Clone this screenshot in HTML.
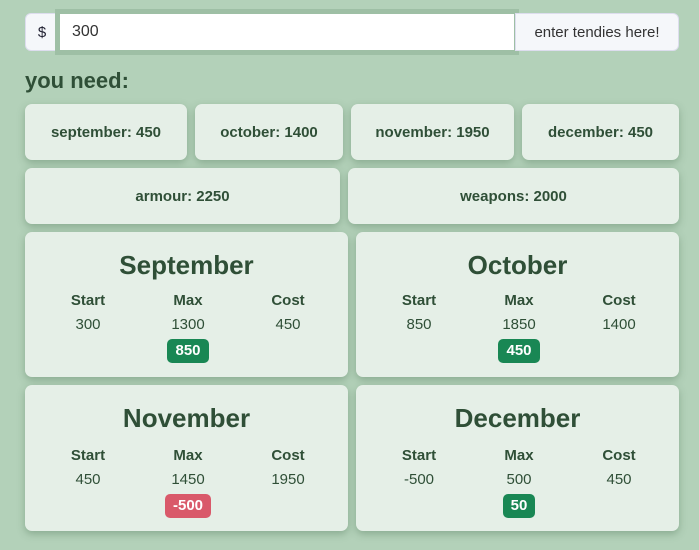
<!DOCTYPE html><html><head><style>
body{margin:0;width:699px;height:550px;background:#b3d1b9;font-family:"Liberation Sans",sans-serif;color:#2f4f37;position:relative;overflow:hidden}
.a{position:absolute;box-sizing:border-box}
.c{background:#e5efe7;border-radius:7px;box-shadow:0 3px 8px rgba(60,100,70,.35);display:flex;align-items:center;justify-content:center;font-size:15px;font-weight:bold}
.big{background:#e5efe7;border-radius:7px;box-shadow:0 3px 8px rgba(60,100,70,.35)}
.t{position:absolute;top:18px;width:100%;text-align:center;font-size:26px;font-weight:bold}
.cols{position:absolute;top:60px;left:13px;display:flex}
.col{width:100px;text-align:center;font-size:15px;line-height:18px}
.col b{display:block;margin-bottom:6px}
.badge{display:inline-block;margin-top:5px;padding:3px 8px;border-radius:5px;color:#fff;font-weight:bold;background:#198754}
</style></head><body>
<div class="a" style="left:25px;top:13px;width:34px;height:38px;background:#f5f7fa;border:1px solid #dde;border-radius:6px 0 0 6px;display:flex;align-items:center;justify-content:center;font-size:15px;color:#223">$</div>
<div class="a" style="left:55px;top:9px;width:464px;height:46px;background:#9ebfa5"></div>
<div class="a" style="left:60px;top:14px;width:454px;height:36px;background:#fff;font-size:16px;color:#333;padding:9px 12px">300</div>
<div class="a" style="left:515px;top:13px;width:164px;height:38px;background:#f5f7fa;border:1px solid #dde;border-radius:0 6px 6px 0;display:flex;align-items:center;justify-content:center;font-size:15px;color:#333">enter tendies here!</div>
<div class="a" style="left:25px;top:68px;font-size:22px;font-weight:bold">you need:</div>
<div class="a c" style="left:25px;top:104px;width:162px;height:56px">september: 450</div>
<div class="a c" style="left:195px;top:104px;width:148px;height:56px">october: 1400</div>
<div class="a c" style="left:351px;top:104px;width:163px;height:56px">november: 1950</div>
<div class="a c" style="left:522px;top:104px;width:157px;height:56px">december: 450</div>
<div class="a c" style="left:25px;top:168px;width:315px;height:56px">armour: 2250</div>
<div class="a c" style="left:348px;top:168px;width:331px;height:56px">weapons: 2000</div>
<div class="a big" style="left:25px;top:232px;width:323px;height:145px"><div class="t">September</div><div class="cols"><div class="col"><b>Start</b>300</div><div class="col"><b>Max</b>1300<br><span class="badge">850</span></div><div class="col"><b>Cost</b>450</div></div></div>
<div class="a big" style="left:356px;top:232px;width:323px;height:145px"><div class="t">October</div><div class="cols"><div class="col"><b>Start</b>850</div><div class="col"><b>Max</b>1850<br><span class="badge">450</span></div><div class="col"><b>Cost</b>1400</div></div></div>
<div class="a big" style="left:25px;top:385px;width:323px;height:146px"><div class="t">November</div><div class="cols" style="top:62px"><div class="col"><b>Start</b>450</div><div class="col"><b>Max</b>1450<br><span class="badge" style="background:#d9596a">-500</span></div><div class="col"><b>Cost</b>1950</div></div></div>
<div class="a big" style="left:356px;top:385px;width:323px;height:146px"><div class="t">December</div><div class="cols" style="top:62px"><div class="col"><b>Start</b>-500</div><div class="col"><b>Max</b>500<br><span class="badge">50</span></div><div class="col"><b>Cost</b>450</div></div></div>
</body></html>
